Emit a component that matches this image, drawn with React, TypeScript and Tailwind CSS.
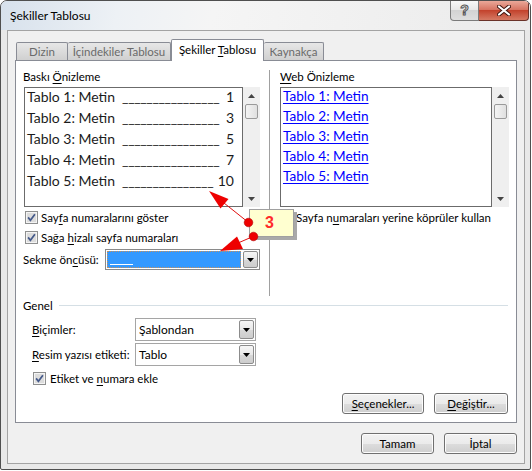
import React from 'react'

const ui = "font-['Lato',sans-serif] text-[11.5px] text-black"
const calibri = "font-['Lato','Liberation_Sans',sans-serif]"

function U({ children }: { children: React.ReactNode }) {
  return <span className="underline decoration-1 underline-offset-[2px]">{children}</span>
}

function CheckBox() {
  return (
    <svg width="13" height="13" viewBox="0 0 13 13" className="shrink-0">
      <rect x="0.5" y="0.5" width="12" height="12" fill="#f4f4f4" stroke="#8e8f8f" />
      <rect x="2" y="2" width="9" height="9" fill="#dcdcdc" />
      <path d="M3.1 6.4 L5.4 9.3 L9.9 3.2" fill="none" stroke="#44598a" strokeWidth="1.7" />
    </svg>
  )
}

function DropButton() {
  return (
    <div className="w-[15px] self-stretch flex items-center justify-center border border-[#8c8c8c] rounded-[2px] bg-[linear-gradient(#f6f6f6,#e8e8e8_50%,#d8d8d8_51%,#cdcdcd)]">
      <svg width="7" height="4" viewBox="0 0 7 4">
        <path d="M0 0H7L3.5 4Z" fill="#000" />
      </svg>
    </div>
  )
}

function ScrollBar() {
  return (
    <div className="w-[17px] h-[120px] bg-[#efefef] flex flex-col">
      <div className="h-[17px] flex items-center justify-center">
        <svg width="7" height="4" viewBox="0 0 7 4">
          <path d="M0 4H7L3.5 0Z" fill="#444" />
        </svg>
      </div>
      <div className="mx-[2px] h-[15px] rounded-[2px] border border-[#9a9a9a] bg-[linear-gradient(90deg,#f4f4f4,#e0e0e0)]" />
      <div className="flex-1" />
      <div className="h-[17px] flex items-center justify-center">
        <svg width="7" height="4" viewBox="0 0 7 4">
          <path d="M0 0H7L3.5 4Z" fill="#444" />
        </svg>
      </div>
    </div>
  )
}

function Button({ w, children }: { w: string; children: React.ReactNode }) {
  return (
    <div
      className={`${w} h-[21px] flex items-center justify-center rounded-[3px] border border-[#707070] bg-[linear-gradient(#f2f2f2,#ebebeb_50%,#dddddd_51%,#cfcfcf)] shadow-[inset_0_0_0_1px_#fcfcfc]`}
    >
      {children}
    </div>
  )
}

function Combo({ children }: { children: React.ReactNode }) {
  return (
    <div className="w-[121px] h-[23px] flex border border-[#a5a5a5] bg-white p-[1px]">
      <div className="flex-1 flex items-center pl-[2px] text-[12px]">{children}</div>
      <DropButton />
    </div>
  )
}

const printRows = [
  ['Tablo 1: Metin', '1', '________________'],
  ['Tablo 2: Metin', '3', '________________'],
  ['Tablo 3: Metin', '5', '________________'],
  ['Tablo 4: Metin', '7', '________________'],
  ['Tablo 5: Metin', '10', '_______________'],
]

export default function App() {
  return (
    <div className={`relative w-[532px] h-[471px] bg-white ${ui}`}>
      {/* Window */}
      <div className="relative w-[531px] h-[470px] rounded-t-[7px] rounded-b-[2px] border border-[#4f4f4f] bg-[#e8e8e8] flex flex-col overflow-hidden">
        {/* Title bar */}
        <div className="h-[29px] shrink-0 flex items-center pl-[9px] text-[12px] bg-[linear-gradient(100deg,#d7e1ec_0%,#edf1f5_22%,#f5f5f5_40%,#ebebeb_100%)]">
          Şekiller Tablosu
        </div>

        {/* Caption buttons */}
        <div className="absolute top-0 right-[1px] flex">
          <div className="w-[29px] h-[20px] rounded-bl-[4px] border border-t-0 border-[#7b7b7b] bg-[linear-gradient(#f8f8f8,#e8e8e8_45%,#d3d3d3_50%,#dedede)] flex items-center justify-center text-[14px] font-bold text-white [-webkit-text-stroke:1px_#555] font-['Liberation_Sans',sans-serif]">
            ?
          </div>
          <div className="w-[50px] h-[20px] rounded-br-[4px] border border-t-0 border-l-0 border-[#6a3229] bg-[linear-gradient(#eaa899,#d77563_45%,#c3432d_50%,#d57a64)] flex items-center justify-center">
            <svg width="14" height="11" viewBox="0 0 14 11">
              <path d="M2 1.5L12 9.5M12 1.5L2 9.5" stroke="#40160f" strokeWidth="4" strokeLinecap="round" />
              <path d="M2 1.5L12 9.5M12 1.5L2 9.5" stroke="#ffffff" strokeWidth="2.2" strokeLinecap="round" />
            </svg>
          </div>
        </div>

        {/* Client area */}
        <div className="ml-[6px] mr-[5px] h-[434px] border border-[#a3a3a3] bg-[#f0f0f0] flex flex-col">
          {/* Tabs */}
          <div className="relative z-10 mt-[8px] ml-[8px] h-[22px] -mb-px flex items-end">
            <div className="w-[52px] h-[18px] mb-px flex items-center justify-center border border-b-0 border-[#898c95] rounded-t-[2px] bg-[linear-gradient(#e7e7e7,#d0d0d0)] text-[#6a6a6a]">
              Dizin
            </div>
            <div className="w-[103px] h-[18px] mb-px flex items-center justify-center border border-b-0 border-l-0 border-[#898c95] rounded-t-[2px] bg-[linear-gradient(#e7e7e7,#d0d0d0)] text-[#6a6a6a]">
              İçindekiler Tablosu
            </div>
            <div className="w-[93px] h-[22px] flex items-center justify-center pb-[2px] border border-b-0 border-[#898c95] rounded-t-[2px] bg-white">
              <span>
                Şekiller <U>T</U>ablosu
              </span>
            </div>
            <div className="w-[60px] h-[18px] mb-px flex items-center justify-center border border-b-0 border-l-0 border-[#898c95] rounded-t-[2px] bg-[linear-gradient(#e7e7e7,#d0d0d0)] text-[#6a6a6a]">
              Kaynakça
            </div>
          </div>

          {/* Tab panel */}
          <div className="ml-[7px] w-[502px] h-[363px] border border-[#898c95] bg-white flex flex-col">
            <div className="h-[235px] flex">
              {/* Print preview column */}
              <div className="ml-[7px] w-[238px] flex flex-col">
                <div className="mt-[8px] h-[15px] leading-[15px]">
                  Baskı <U>Ö</U>nizleme
                </div>
                <div className="mt-[3px] ml-px flex">
                  <div className={`w-[219px] h-[120px] border border-[#6b6b6b] bg-white pl-[2px] pr-[8px] text-[14px] text-[#1b1b1b] leading-[17px] ${calibri}`}>
                    {printRows.map(([t, n, lead]) => (
                      <div key={t} className="flex h-[21px] whitespace-nowrap">
                        <span>{t}</span>
                        <span className="ml-[7px] tracking-[-0.35px]">{lead}</span>
                        <span className="ml-auto">{n}</span>
                      </div>
                    ))}
                  </div>
                  <ScrollBar />
                </div>
                <div className="mt-[4px] ml-[2px] h-[13px] flex items-center gap-[3px]">
                  <CheckBox />
                  <span>
                    Say<U>f</U>a numaralarını göster
                  </span>
                </div>
                <div className="mt-[7px] ml-[2px] h-[13px] flex items-center gap-[3px]">
                  <CheckBox />
                  <span>
                    Sağa <U>h</U>izalı sayfa numaraları
                  </span>
                </div>
                <div className="mt-[5px] h-[21px] flex items-center">
                  <span className="w-[82px]">
                    Sekme ön<U>c</U>üsü:
                  </span>
                  <div className="w-[155px] h-[21px] flex border border-[#8a8a8a] bg-white p-px gap-[2px]">
                    <div className="flex-1 border border-dotted border-[#c9915a] bg-[#3399ff] flex items-end pl-[2px] pb-[2px]">
                      <div className="w-[23px] h-px bg-white" />
                    </div>
                    <DropButton />
                  </div>
                </div>
              </div>

              {/* Separator */}
              <div className="ml-[8px] mt-[9px] w-px h-[226px] bg-[#a0a0a0]" />

              {/* Web preview column */}
              <div className="ml-[10px] w-[229px] flex flex-col">
                <div className="mt-[8px] h-[15px] leading-[15px]">
                  <U>W</U>eb Önizleme
                </div>
                <div className="mt-[3px] flex">
                  <div className={`w-[212px] h-[120px] border border-[#6b6b6b] bg-white pl-[2px] text-[13.6px] leading-[16px] text-[#0000ff] ${calibri}`}>
                    {printRows.map(([t]) => (
                      <div key={t} className="h-[20px]">
                        <span className="underline decoration-1 underline-offset-[2px]">{t}</span>
                      </div>
                    ))}
                  </div>
                  <ScrollBar />
                </div>
                <div className="mt-[4px] ml-px h-[13px] flex items-center gap-[2px]">
                  <CheckBox />
                  <span>
                    Sayfa n<U>u</U>maraları yerine köprüler kullan
                  </span>
                </div>
              </div>
            </div>

            {/* Genel */}
            <div className="mt-[2px] ml-[7px] mr-[8px] h-[15px] flex items-center">
              <span>Genel</span>
              <div className="ml-[6px] flex-1 h-px bg-[#d5dfe5]" />
            </div>
            <div className="mt-[5px] ml-[16px] h-[23px] flex items-center">
              <span className="w-[103px]">
                <U>B</U>içimler:
              </span>
              <Combo>Şablondan</Combo>
            </div>
            <div className="mt-[2px] ml-[16px] h-[23px] flex items-center">
              <span className="w-[103px]">
                <U>R</U>esim yazısı etiketi:
              </span>
              <Combo>Tablo</Combo>
            </div>
            <div className="mt-[6px] ml-[17px] h-[13px] flex items-center gap-[4px]">
              <CheckBox />
              <span>
                Etiket ve <U>n</U>umara ekle
              </span>
            </div>
            <div className="mt-[8px] pr-[8px] flex justify-end gap-[10px]">
              <Button w="w-[82px]">
                <span>
                  <U>S</U>eçenekler...
                </span>
              </Button>
              <Button w="w-[74px]">
                <span>
                  <U>D</U>eğiştir...
                </span>
              </Button>
            </div>
          </div>

          {/* Dialog buttons */}
          <div className="mt-[10px] pr-[7px] flex justify-end gap-[10px]">
            <Button w="w-[73px]">Tamam</Button>
            <Button w="w-[73px]">İptal</Button>
          </div>
        </div>
      </div>

      {/* Annotation callout */}
      <div className="absolute left-[249px] top-[209px] w-[45px] h-[28px] bg-[#ffffd0] border border-[#a0a0a0] shadow-[3px_3px_0_#a9a9a9] flex items-center justify-center pr-[4px] text-[16px] font-bold text-[#ff2b2b] font-['Liberation_Sans',sans-serif]">
        3
      </div>
      <svg className="absolute left-0 top-0 pointer-events-none" width="532" height="471" viewBox="0 0 532 471">
        <line x1="248.5" y1="222.5" x2="224" y2="203" stroke="#e01010" strokeWidth="1" />
        <polygon points="209,191 228.5,199 220.5,208.5" fill="#ee0000" />
        <line x1="253" y1="236.5" x2="238" y2="243" stroke="#e01010" strokeWidth="1" />
        <polygon points="220,251 237,236.5 243,249" fill="#ee0000" />
        <circle cx="248.5" cy="222.5" r="4.3" fill="#ee0000" stroke="#b00000" strokeWidth="0.6" />
        <circle cx="253.5" cy="236.5" r="4.3" fill="#ee0000" stroke="#b00000" strokeWidth="0.6" />
      </svg>
    </div>
  )
}
